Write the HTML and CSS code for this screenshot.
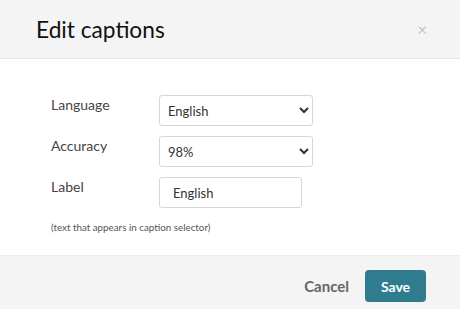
FILE: index.html
```html
<!DOCTYPE html>
<html lang="en">
<head>
  <meta charset="UTF-8" />
  <meta name="viewport" content="width=device-width, initial-scale=1.0" />
  <title>Edit captions</title>
  <link rel="stylesheet" href="styles.css">
</head>
<body>
  <div class="modal">
    <div class="modal-header">
      <h2 class="modal-title">Edit captions</h2>
      <button class="close-button">&times;</button>
    </div>
    <div class="modal-body">
      <div class="form-row">
        <label class="form-label">Language</label>
        <select class="form-select">
          <option>English</option>
        </select>
      </div>
      <div class="form-row">
        <label class="form-label">Accuracy</label>
        <select class="form-select">
          <option>98%</option>
        </select>
      </div>
      <div class="form-row">
        <label class="form-label">Label</label>
        <input type="text" class="form-input" value="English" />
      </div>
      <p class="help-text">(text that appears in caption selector)</p>
    </div>
    <div class="modal-footer">
      <button class="cancel-button">Cancel</button>
      <button class="save-button">Save</button>
    </div>
  </div>
</body>
</html>
```

FILE: styles.css
```css
body {
  margin: 0;
  padding: 0;
  font-family: Lato, "Open Sans", sans-serif;
  background: white;
}
.modal {
  width: 460px;
  height: 309px;
  display: flex;
  flex-direction: column;
}
.modal-header {
  height: 58px;
  background: #f4f4f4;
  border-bottom: 1px solid #e6e6e6;
  display: flex;
  align-items: center;
  justify-content: space-between;
  padding: 0 33px 0 36px;
}
.modal-title {
  margin: 0;
  font-size: 22.7px;
  font-weight: normal;
  color: #111;
}
.close-button {
  border: none;
  background: none;
  color: #c4c4c4;
  font-size: 17px;
  padding: 0;
  cursor: pointer;
  font-family: inherit;
}
.modal-body {
  flex: 1;
  padding: 36px 0 0 51px;
}
.form-row {
  display: flex;
  align-items: flex-start;
  margin-bottom: 10px;
}
.form-label {
  width: 108px;
  font-size: 14px;
  color: #444;
  line-height: 18px;
  padding-top: 1px;
}
.form-select,
.form-input {
  box-sizing: border-box;
  height: 31px;
  border: 1px solid #d6d6d6;
  border-radius: 3px;
  background: white;
  font-family: inherit;
  font-size: 13px;
  color: #333;
}
.form-select {
  width: 154px;
  padding: 0 4px;
}
.form-input {
  width: 143px;
  padding: 0 13px;
}
.help-text {
  margin: 13px 0 0;
  font-size: 9.8px;
  color: #555;
}
.modal-footer {
  height: 54px;
  box-sizing: border-box;
  background: #f4f4f4;
  border-top: 1px solid #ececec;
  display: flex;
  align-items: flex-start;
  justify-content: flex-end;
  padding: 14px 34px 0 0;
}
.cancel-button {
  border: none;
  background: none;
  padding: 0;
  height: 32px;
  font-family: inherit;
  font-size: 15px;
  font-weight: bold;
  color: #666;
  margin-right: 16px;
  cursor: pointer;
}
.save-button {
  width: 61px;
  height: 32px;
  border: none;
  border-radius: 4px;
  background: #2f7c8f;
  color: white;
  font-family: inherit;
  font-size: 14px;
  font-weight: bold;
  cursor: pointer;
}
```
